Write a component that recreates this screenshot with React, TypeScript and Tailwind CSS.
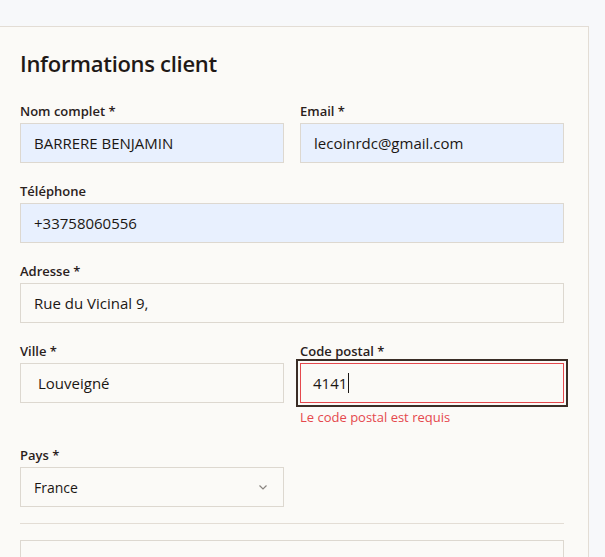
import React from "react";

const font = { fontFamily: '"Segoe UI", "Open Sans", "Noto Sans", sans-serif' };

function Label({ children }: { children: React.ReactNode }) {
  return <div className="text-[13px] font-semibold leading-[16px] text-[#2a211c] mb-[4px]">{children}</div>;
}

export default function App() {
  return (
    <div className="h-[557px] w-[605px] bg-[#f7f8fa] pt-[26px] overflow-hidden" style={font}>
      <div className="ml-[-5px] w-[594px] h-[560px] bg-[#fbfaf7] border border-[#e3ddd5] pl-[24px] pr-[24px] pt-[20px]">
        <h2 className="text-[22px] font-semibold leading-[32px] text-[#1f1916] tracking-[-0.3px]">Informations client</h2>
        <div className="mt-[24px] grid grid-cols-2 gap-x-[16px]">
          <div>
            <Label>Nom complet *</Label>
            <div className="h-[40px] border border-[#ddd8d0] bg-[#e8f0fe] flex items-center px-[13px] text-[15px] text-[#1b1714]">BARRERE BENJAMIN</div>
          </div>
          <div>
            <Label>Email *</Label>
            <div className="h-[40px] border border-[#ddd8d0] bg-[#e8f0fe] flex items-center px-[13px] text-[15px] text-[#1b1714]">lecoinrdc@gmail.com</div>
          </div>
        </div>
        <div className="mt-[20px]">
          <Label>Téléphone</Label>
          <div className="h-[40px] border border-[#ddd8d0] bg-[#e8f0fe] flex items-center px-[13px] text-[15px] text-[#1b1714]">+33758060556</div>
        </div>
        <div className="mt-[20px]">
          <Label>Adresse *</Label>
          <div className="h-[40px] border border-[#ddd8d0] flex items-center px-[13px] text-[15px] text-[#1b1714]">Rue du Vicinal 9,</div>
        </div>
        <div className="mt-[20px] grid grid-cols-2 gap-x-[16px]">
          <div>
            <Label>Ville *</Label>
            <div className="h-[40px] border border-[#ddd8d0] flex items-center px-[17px] text-[15px] text-[#1b1714]">Louveigné</div>
          </div>
          <div>
            <Label>Code postal *</Label>
            <div className="h-[40px] border border-[#e5484d] outline-2 outline-offset-2 outline-[#3a2d26] flex items-center px-[12px] text-[15px] text-[#1b1714]">
              4141<span className="inline-block w-px h-[20px] bg-[#1b1714] ml-[1px]" />
            </div>
            <div className="mt-[6px] text-[13px] leading-[16px] text-[#e5484d]">Le code postal est requis</div>
          </div>
        </div>
        <div className="mt-[22px] grid grid-cols-2 gap-x-[16px]">
          <div>
            <Label>Pays *</Label>
            <div className="h-[40px] border border-[#ddd8d0] flex items-center justify-between pl-[13px] pr-[14px] text-[14px] text-[#1b1714]">
              <span>France</span>
              <svg width="12" height="12" viewBox="0 0 12 12" fill="none" stroke="#8a8580" strokeWidth="1.2"><path d="M2.5 4.5 L6 8 L9.5 4.5" /></svg>
            </div>
          </div>
        </div>
        <div className="mt-[16px] h-px bg-[#e3ddd5]" />
        <div className="mt-[16px] h-[40px] border border-[#ddd8d0]" />
      </div>
    </div>
  );
}
